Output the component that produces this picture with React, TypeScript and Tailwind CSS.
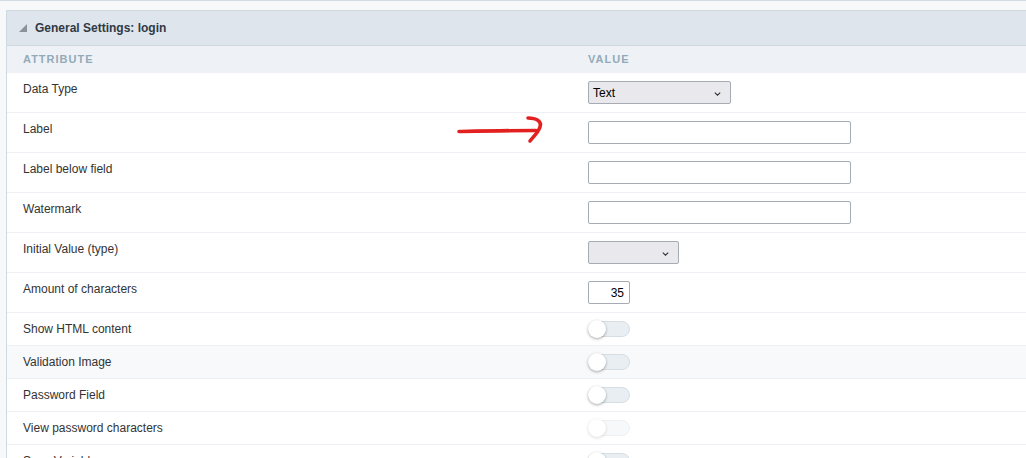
import React from "react"

type Row =
  | { label: string; kind: "select"; value: string; width: string }
  | { label: string; kind: "text" }
  | { label: string; kind: "number"; value: string }
  | { label: string; kind: "toggle"; disabled?: boolean; hover?: boolean }

const rows: Row[] = [
  { label: "Data Type", kind: "select", value: "Text", width: "w-[143px]" },
  { label: "Label", kind: "text" },
  { label: "Label below field", kind: "text" },
  { label: "Watermark", kind: "text" },
  { label: "Initial Value (type)", kind: "select", value: "", width: "w-[91px]" },
  { label: "Amount of characters", kind: "number", value: "35" },
  { label: "Show HTML content", kind: "toggle" },
  { label: "Validation Image", kind: "toggle", hover: true },
  { label: "Password Field", kind: "toggle" },
  { label: "View password characters", kind: "toggle", disabled: true },
  { label: "Save Variable", kind: "toggle" },
]

function Chevron() {
  return (
    <svg width="7" height="4" viewBox="0 0 7 4" className="absolute right-[9px] top-[10px]">
      <path d="M0.8 0.6 L3.5 3.2 L6.2 0.6" fill="none" stroke="#333" strokeWidth="1.1" />
    </svg>
  )
}

function Toggle({ disabled }: { disabled?: boolean }) {
  return (
    <div className={`relative w-[42px] h-[16px] ${disabled ? "opacity-40" : ""}`}>
      <div className="absolute inset-0 rounded-full bg-[#e9eef2] border border-[#d6dee4]"></div>
      <div className="absolute left-0 top-[-1px] w-[18px] h-[18px] rounded-full bg-white shadow-[0_1px_3px_rgba(0,0,0,0.35)]"></div>
    </div>
  )
}

function Value({ row }: { row: Row }) {
  if (row.kind === "select") {
    return (
      <div className={`relative h-[23px] ${row.width} rounded-[2px] border border-[#a7acb4] bg-[#e9e9ed] text-[12px] text-black leading-[22px] pl-[4px]`}>
        {row.value}
        <Chevron />
      </div>
    )
  }
  if (row.kind === "text") {
    return <div className="h-[23px] w-[263px] rounded-[2px] border border-[#a7acb4] bg-white"></div>
  }
  if (row.kind === "number") {
    return (
      <div className="h-[23px] w-[42px] rounded-[2px] border border-[#a7acb4] bg-white text-[12px] text-black leading-[22px] text-right pr-[5px]">
        {row.value}
      </div>
    )
  }
  return <Toggle disabled={row.disabled} />
}

export default function App() {
  return (
    <div className="w-[1026px] h-[458px] overflow-hidden bg-white font-['Liberation_Sans',Arial,sans-serif]">
      <div className="border-t border-[#d3dbe2] bg-[#f7f8fa] pt-[9px] pl-[6px]">
        <div className="relative w-[1040px] border-l border-t border-[#d0d8e0] bg-white">
          {/* header */}
          <div className="flex items-center gap-[8px] h-[35px] bg-[#dfe5ec] border-b border-[#cfd7df] pl-[12px]">
            <svg width="8" height="8" viewBox="0 0 8 8">
              <polygon points="8,0 8,8 0,8" fill="#8a939c" />
            </svg>
            <span className="text-[12px] font-bold text-[#2f3a44]">General Settings: login</span>
          </div>

          {/* column titles */}
          <div className="flex h-[27px] items-center bg-[#eef2f6] text-[11px] font-bold tracking-[1px] text-[#93aab8]">
            <div className="w-[565px] pl-[16px]">ATTRIBUTE</div>
            <div className="pl-[16px]">VALUE</div>
          </div>

          {rows.map((row, i) => (
            <div
              key={i}
              className={`flex border-b border-[#edf0f4] ${row.hover ? "bg-[#f7f9fb]" : "bg-white"}`}
            >
              <div className="w-[565px] pl-[16px] pt-[9px] text-[12px] leading-[14px] text-[#333]">{row.label}</div>
              <div className="pl-[16px] py-[8px]">
                <Value row={row} />
              </div>
            </div>
          ))}

          {/* red annotation arrow */}
          <svg
            className="absolute left-[443px] top-[98px]"
            width="100"
            height="40"
            viewBox="0 0 100 40"
          >
            <path
              d="M9 22.5 C 35 22, 60 21.5, 86 21.5"
              fill="none"
              stroke="#e32020"
              strokeWidth="3.6"
              strokeLinecap="round"
            />
            <path
              d="M78 9 C 86 9, 92 12, 90 18 C 88 24, 83 28, 80 32"
              fill="none"
              stroke="#e32020"
              strokeWidth="3.6"
              strokeLinecap="round"
            />
          </svg>
        </div>
      </div>
    </div>
  )
}
